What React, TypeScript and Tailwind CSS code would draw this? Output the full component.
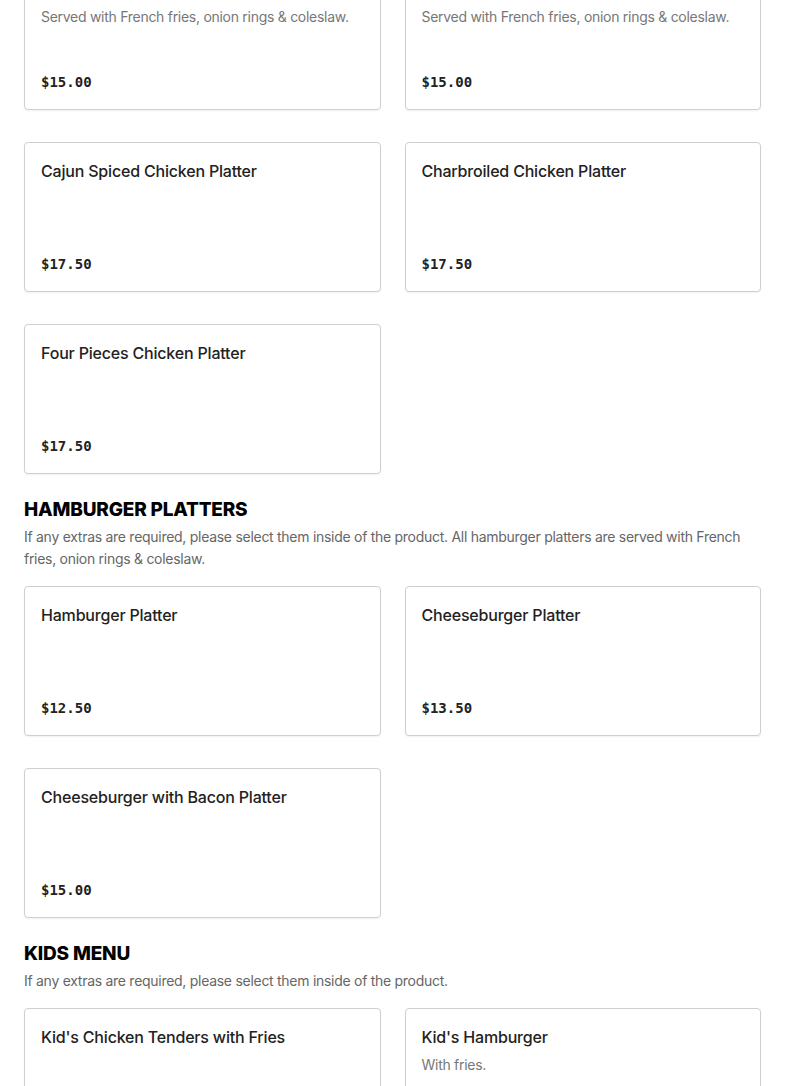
import React from "react";

type Item = { name: string; desc?: string; price: string };
type Section = { title?: string; note?: string; items: Item[]; first?: boolean };

const sections: Section[] = [
  {
    first: true,
    items: [
      { name: "Cheeseburger with Bacon Platter", desc: "Served with French fries, onion rings & coleslaw.", price: "$15.00" },
      { name: "Double Cheeseburger Platter", desc: "Served with French fries, onion rings & coleslaw.", price: "$15.00" },
      { name: "Cajun Spiced Chicken Platter", price: "$17.50" },
      { name: "Charbroiled Chicken Platter", price: "$17.50" },
      { name: "Four Pieces Chicken Platter", price: "$17.50" },
    ],
  },
  {
    title: "HAMBURGER PLATTERS",
    note: "If any extras are required, please select them inside of the product. All hamburger platters are served with French fries, onion rings & coleslaw.",
    items: [
      { name: "Hamburger Platter", price: "$12.50" },
      { name: "Cheeseburger Platter", price: "$13.50" },
      { name: "Cheeseburger with Bacon Platter", price: "$15.00" },
    ],
  },
  {
    title: "KIDS MENU",
    note: "If any extras are required, please select them inside of the product.",
    items: [
      { name: "Kid's Chicken Tenders with Fries", price: "$9.50" },
      { name: "Kid's Hamburger", desc: "With fries.", price: "$9.50" },
    ],
  },
];

function Card({ item }: { item: Item }) {
  return (
    <div className="flex h-[150px] flex-col rounded border border-[#cfcfcf] bg-white px-4 pt-4 pb-[17px] shadow-[0_1px_2px_rgba(0,0,0,.06)]">
      <h3 className="text-[16px] leading-6 font-medium tracking-[-0.012em] text-[#222]">{item.name}</h3>
      {item.desc && (
        <p className="mt-[5px] text-[14px] leading-[22px] tracking-[-0.02em] text-[#777]">{item.desc}</p>
      )}
      <div className="mt-auto font-['DejaVu_Sans_Mono',monospace] text-[14px] leading-5 font-bold text-[#222]">
        {item.price}
      </div>
    </div>
  );
}

export default function App() {
  return (
    <div className="min-h-screen overflow-hidden bg-white font-['Inter',sans-serif]">
      <div className="px-6 -mt-[40px]">
        {sections.map((s, i) => (
          <section key={i} className={s.first ? "" : "mt-[22px]"}>
            {s.title && (
              <>
                <h2 className="text-[19px] leading-7 font-extrabold tracking-[-0.01em] text-black">{s.title}</h2>
                <p className="mt-[2px] text-[14px] leading-[22px] tracking-[-0.02em] text-[#666]">{s.note}</p>
              </>
            )}
            <div className={"grid grid-cols-2 gap-x-6 gap-y-8 " + (s.title ? "mt-4" : "")}>
              {s.items.map((it) => (
                <Card key={it.name} item={it} />
              ))}
            </div>
          </section>
        ))}
      </div>
    </div>
  );
}
